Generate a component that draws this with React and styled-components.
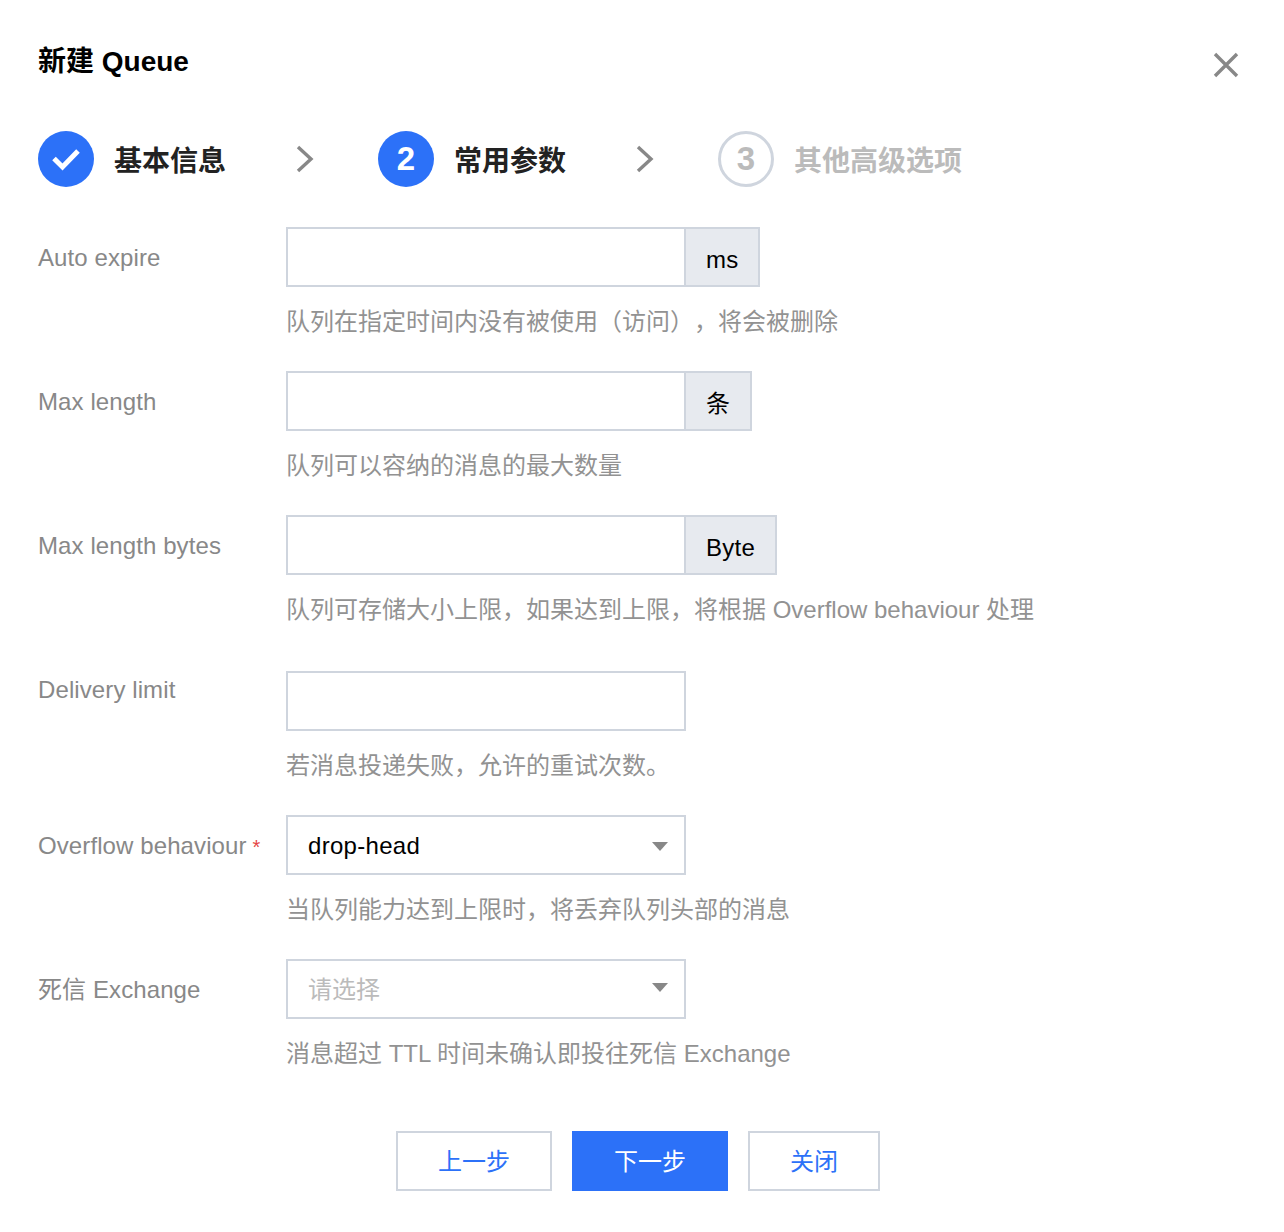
import React from 'react'
import styled, { createGlobalStyle } from 'styled-components'

const FONT = `"Liberation Sans", "Noto Sans CJK SC", sans-serif`
const BLUE = '#2c71f8'
const BORDER = '#cfd5de'

const GlobalStyle = createGlobalStyle`
  * { box-sizing: border-box; }
  html, body { margin: 0; background: #fff; }
  body { font-family: ${FONT}; color: #000; }
`

const Dialog = styled.div`
  position: relative;
  width: 1284px;
  height: 1232px;
  padding: 42px 38px 0;
  overflow: hidden;
`

const Title = styled.h2`
  margin: 0;
  font-size: 28px;
  line-height: 40px;
  font-weight: 700;
  color: #000;
`

const Close = styled.button`
  position: absolute;
  top: 52px;
  right: 45px;
  width: 26px;
  height: 26px;
  padding: 0;
  border: 0;
  background: none;
  display: block;
`

const Steps = styled.div`
  display: flex;
  align-items: center;
  margin-top: 49px;
  height: 56px;
`

const Circle = styled.div`
  flex: none;
  width: 56px;
  height: 56px;
  border-radius: 50%;
  display: flex;
  align-items: center;
  justify-content: center;
  font-size: 33px;
  font-weight: 700;
  color: ${p => (p.$todo ? '#bbb' : '#fff')};
  background: ${p => (p.$todo ? '#fff' : BLUE)};
  border: ${p => (p.$todo ? `3px solid ${BORDER}` : 'none')};
`

const StepLabel = styled.div`
  margin: 6px 0 0 20px;
  font-size: 28px;
  line-height: 40px;
  font-weight: 700;
  color: ${p => (p.$todo ? '#bbb' : '#222')};
`

const Chevron = styled.svg`
  flex: none;
  width: 18px;
  height: 28px;
  margin-left: 70px;
  margin-right: 64px;
`

const Form = styled.div`
  margin-top: 40px;
`

const Row = styled.div`
  display: flex;
  align-items: flex-start;
  height: ${p => p.$height || 144}px;
`

const Label = styled.div`
  flex: none;
  width: 248px;
  font-size: 24px;
  line-height: 62px;
  letter-spacing: 0.1px;
  color: #888;
  height: 60px;
  margin-top: ${p => p.$nudge || 0}px;
`

const Required = styled.span`
  color: #e54545;
  margin-left: 6px;
  font-size: 20px;
`

const Control = styled.div`
  display: flex;
  flex-direction: column;
`

const InputGroup = styled.div`
  display: flex;
  height: 60px;
`

const Input = styled.div`
  width: 400px;
  height: 60px;
  background: #fff;
  border: 2px solid ${BORDER};
`

const Addon = styled.div`
  margin-left: -2px;
  width: ${p => p.$width}px;
  height: 60px;
  padding: 4px 0 0 20px;
  line-height: 54px;
  font-size: 24px;
  letter-spacing: 0.25px;
  color: #000;
  background: #e7eaef;
  border: 2px solid ${BORDER};
`

const Select = styled.div`
  width: 400px;
  height: 60px;
  padding: ${p => (p.$placeholder ? '0 20px 3px' : '2px 20px 0')};
  display: flex;
  align-items: center;
  justify-content: space-between;
  font-size: 24px;
  letter-spacing: ${p => (p.$placeholder ? 0 : '0.3px')};
  color: ${p => (p.$placeholder ? '#bbb' : '#000')};
  border: 2px solid ${BORDER};
`

const Caret = styled.span`
  width: 0;
  height: 0;
  margin-right: -4px;
  border-left: 8px solid transparent;
  border-right: 8px solid transparent;
  border-top: 9px solid #888;
`

const Help = styled.div`
  margin-top: 17px;
  font-size: 24px;
  line-height: 36px;
  color: #929292;
  white-space: nowrap;
  text-spacing-trim: space-all;
`

const Footer = styled.div`
  display: flex;
  justify-content: center;
  gap: 20px;
  margin-top: 28px;
  padding-right: 8px;
`

const Button = styled.button`
  width: ${p => p.$width}px;
  height: 60px;
  padding: 0 0 4px;
  font-family: ${FONT};
  font-size: 24px;
  color: ${p => (p.$primary ? '#fff' : BLUE)};
  background: ${p => (p.$primary ? BLUE : '#fff')};
  border: 2px solid ${p => (p.$primary ? BLUE : BORDER)};
`

function App() {
  return (
    <Dialog>
      <GlobalStyle />
      <Title>新建 Queue</Title>
      <Close aria-label="关闭">
        <svg width="26" height="26" viewBox="0 0 26 26">
          <path d="M2 2 L24 24 M24 2 L2 24" stroke="#888" strokeWidth="3.4" fill="none" />
        </svg>
      </Close>

      <Steps>
        <Circle>
          <svg width="30" height="24" viewBox="0 0 30 24">
            <path d="M3 11.5 L11.5 20 L27 4" stroke="#fff" strokeWidth="5" fill="none" />
          </svg>
        </Circle>
        <StepLabel>基本信息</StepLabel>
        <Chevron viewBox="0 0 18 28">
          <path d="M2 2 L15 14 L2 26" stroke="#888" strokeWidth="3.4" fill="none" />
        </Chevron>
        <Circle>2</Circle>
        <StepLabel>常用参数</StepLabel>
        <Chevron viewBox="0 0 18 28">
          <path d="M2 2 L15 14 L2 26" stroke="#888" strokeWidth="3.4" fill="none" />
        </Chevron>
        <Circle $todo>3</Circle>
        <StepLabel $todo>其他高级选项</StepLabel>
      </Steps>

      <Form>
        <Row>
          <Label>Auto expire</Label>
          <Control>
            <InputGroup>
              <Input />
              <Addon $width={76}>ms</Addon>
            </InputGroup>
            <Help>队列在指定时间内没有被使用（访问），将会被删除</Help>
          </Control>
        </Row>
        <Row>
          <Label>Max length</Label>
          <Control>
            <InputGroup>
              <Input />
              <Addon $width={68}>条</Addon>
            </InputGroup>
            <Help>队列可以容纳的消息的最大数量</Help>
          </Control>
        </Row>
        <Row $height={156}>
          <Label>Max length bytes</Label>
          <Control>
            <InputGroup>
              <Input />
              <Addon $width={93}>Byte</Addon>
            </InputGroup>
            <Help>队列可存储大小上限，如果达到上限，将根据 Overflow behaviour 处理</Help>
          </Control>
        </Row>
        <Row>
          <Label $nudge={-12}>Delivery limit</Label>
          <Control>
            <Input />
            <Help>若消息投递失败，允许的重试次数。</Help>
          </Control>
        </Row>
        <Row>
          <Label>
            Overflow behaviour<Required>*</Required>
          </Label>
          <Control>
            <Select>
              drop-head
              <Caret />
            </Select>
            <Help>当队列能力达到上限时，将丢弃队列头部的消息</Help>
          </Control>
        </Row>
        <Row>
          <Label>死信 Exchange</Label>
          <Control>
            <Select $placeholder>
              请选择
              <Caret />
            </Select>
            <Help>消息超过 TTL 时间未确认即投往死信 Exchange</Help>
          </Control>
        </Row>
      </Form>

      <Footer>
        <Button $width={156}>上一步</Button>
        <Button $width={156} $primary>下一步</Button>
        <Button $width={132}>关闭</Button>
      </Footer>
    </Dialog>
  )
}

export default App
